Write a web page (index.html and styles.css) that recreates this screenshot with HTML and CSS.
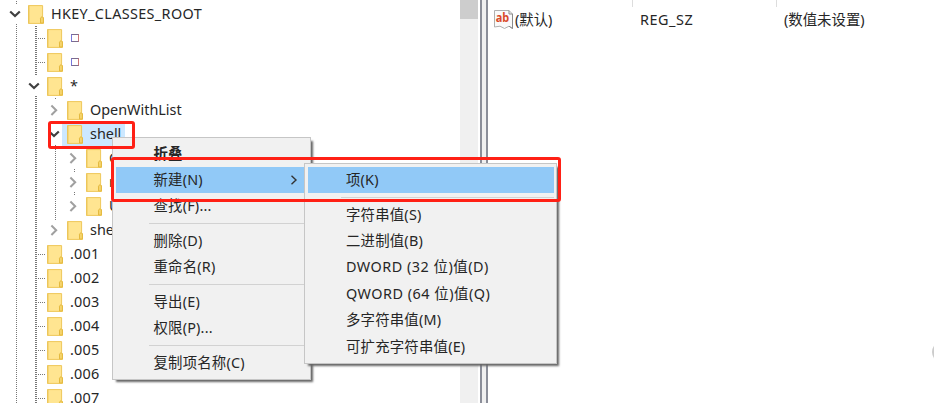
FILE: index.html
```
<!DOCTYPE html>
<html lang="zh">
<head>
<meta charset="utf-8">
<title>注册表编辑器</title>
<link rel="stylesheet" href="styles.css">
</head>
<body>
<svg width="0" height="0" class="defs">
  <symbol id="folder" viewBox="0 0 16 19">
    <path d="M.6 .6H14.6V11.5L15.5 13V18.4H.6Z" fill="#ffe591" stroke="#efc75a"/>
    <path d="M.7 .5V18.5" stroke="#ecc65a" stroke-width="1.4"/>
    <path d="M12.5 18V13.2L14 11.5L15.4 13V18Z" fill="#f5d46d" stroke="#e4b93f"/>
  </symbol>
  <symbol id="down" viewBox="0 0 12 12"><path d="M1.2 3.5L6 8.1L10.8 3.5" fill="none" stroke="#404040" stroke-width="2.2"/></symbol>
  <symbol id="right" viewBox="0 0 12 12"><path d="M3.4 1.5L8.2 6.2L3.4 11" fill="none" stroke="#a0a0a0" stroke-width="2"/></symbol>
</svg>
<main class="window">
  <section class="tree">
    <svg class="guides" width="100" height="403">
      <g fill="none" stroke="#777" stroke-dasharray="1 1">
        <path d="M16.5 1V4M16.5 24V403M55.5 98V100M55.5 121V124M55.5 145V220M74.5 169V173M74.5 192V196"/>
        <path d="M36 26V76M36 96V403" stroke-width="2"/>
        <path d="M38 38.5H45M38 62.5H45M38 254.5H45M38 278.5H45M38 302.5H45M38 326.5H45M38 350.5H45M38 374.5H45M38 398.5H45"/>
      </g>
    </svg>
    <div class="row l0"><svg class="chev"><use href="#down"/></svg><svg class="folder"><use href="#folder"/></svg><span class="root">HKEY_CLASSES_ROOT</span></div>
    <div class="row l1"><i class="chev"></i><svg class="folder"><use href="#folder"/></svg><i class="box"></i></div>
    <div class="row l1"><i class="chev"></i><svg class="folder"><use href="#folder"/></svg><i class="box"></i></div>
    <div class="row l1"><svg class="chev"><use href="#down"/></svg><svg class="folder"><use href="#folder"/></svg><span>*</span></div>
    <div class="row l2"><svg class="chev"><use href="#right"/></svg><svg class="folder"><use href="#folder"/></svg><span class="open">OpenWithList</span></div>
    <div class="row l2 selected"><svg class="chev"><use href="#down"/></svg><svg class="folder"><use href="#folder"/></svg><span class="open">shell</span></div>
    <div class="row l3"><svg class="chev"><use href="#right"/></svg><svg class="folder"><use href="#folder"/></svg><span>Co</span></div>
    <div class="row l3"><svg class="chev"><use href="#right"/></svg><svg class="folder"><use href="#folder"/></svg><span>ru</span></div>
    <div class="row l3"><svg class="chev"><use href="#right"/></svg><svg class="folder"><use href="#folder"/></svg><span>Up</span></div>
    <div class="row l2"><svg class="chev"><use href="#right"/></svg><svg class="folder"><use href="#folder"/></svg><span class="open">shellex</span></div>
    <div class="row l1"><i class="chev"></i><svg class="folder"><use href="#folder"/></svg><span>.001</span></div>
    <div class="row l1"><i class="chev"></i><svg class="folder"><use href="#folder"/></svg><span>.002</span></div>
    <div class="row l1"><i class="chev"></i><svg class="folder"><use href="#folder"/></svg><span>.003</span></div>
    <div class="row l1"><i class="chev"></i><svg class="folder"><use href="#folder"/></svg><span>.004</span></div>
    <div class="row l1"><i class="chev"></i><svg class="folder"><use href="#folder"/></svg><span>.005</span></div>
    <div class="row l1"><i class="chev"></i><svg class="folder"><use href="#folder"/></svg><span>.006</span></div>
    <div class="row l1"><i class="chev"></i><svg class="folder"><use href="#folder"/></svg><span>.007</span></div>
  </section>
  <div class="scrollbar"><div class="thumb"></div></div>
  <div class="splitter"></div>
  <section class="values">
    <div class="headline"><i></i><i></i></div>
    <div class="value">
      <div class="name">
        <svg width="20" height="21" viewBox="0 0 20 21">
          <path d="M.5 1.5H15L18.5 5V19.5L15 17.2L10.5 19.5L6 17.2L.5 18Z" fill="#fafafa" stroke="#b0b0b0"/>
          <path d="M15 1.5V5H18.5V19.5L15 17.2" fill="none" stroke="#8b8b8b"/>
          <text x="1.8" y="13" textLength="13.5" lengthAdjust="spacingAndGlyphs">ab</text>
        </svg><span>(默认)</span>
      </div>
      <span class="type">REG_SZ</span><span class="data">(数值未设置)</span>
    </div>
  </section>
</main>
<div class="edge"></div>
<div class="menu main">
  <div class="item bold">折叠</div>
  <div class="item hot">新建(N)<svg class="arrow" width="8" height="10"><path d="M1.5 .8L6 5L1.5 9.2" fill="none" stroke="#333" stroke-width="1.4"/></svg></div>
  <div class="item">查找(F)...</div>
  <hr>
  <div class="item">删除(D)</div>
  <div class="item">重命名(R)</div>
  <hr>
  <div class="item">导出(E)</div>
  <div class="item">权限(P)...</div>
  <hr>
  <div class="item">复制项名称(C)</div>
</div>
<div class="menu sub">
  <div class="item hot">项(K)</div>
  <hr>
  <div class="item">字符串值(S)</div>
  <div class="item">二进制值(B)</div>
  <div class="item word">DWORD (32 位)值(D)</div>
  <div class="item word">QWORD (64 位)值(Q)</div>
  <div class="item">多字符串值(M)</div>
  <div class="item">可扩充字符串值(E)</div>
</div>
<div class="mark mark-key"></div>
<div class="mark mark-new"></div>
</body>
</html>
```

FILE: styles.css
```
* { box-sizing: border-box; }
body {
  margin: 0;
  width: 934px;
  height: 403px;
  overflow: hidden;
  position: relative;
  background: #fff;
  color: #262626;
  font: 14.4px/24px "Noto Sans", "Noto Sans CJK SC", sans-serif;
}
.defs { position: absolute; }
.window { display: flex; height: 403px; overflow: hidden; }
.tree { position: relative; width: 460px; padding-top: 2px; flex: none; }
.guides { position: absolute; left: 0; top: 0; }
.row { position: relative; display: flex; align-items: center; height: 24px; white-space: nowrap; }
.l0 { padding-left: 9px; }
.l1 { padding-left: 28px; }
.l2 { padding-left: 48px; }
.l3 { padding-left: 67px; }
.chev { width: 12px; height: 12px; margin-right: 7px; flex: none; }
.folder { width: 16px; height: 19px; margin-right: 7px; flex: none; }
.row span { letter-spacing: .2px; }
.row .root { letter-spacing: .35px; }
.row .open { letter-spacing: 0; }
.box { width: 8px; height: 8px; margin-left: 1px; border: 1px solid #7b6b8d; border-left-color: #77d; border-right-color: #c77; }
.selected { width: 125px; background: linear-gradient(to right, transparent 62px, #cce8ff 62px); }
.scrollbar { width: 18px; background: #f0f0f0; flex: none; }
.thumb { height: 19px; background: #cdcdcd; }
.splitter { width: 8px; margin-left: 2px; border: solid #8b8e99; border-width: 0 2px; background: #f0f0f0; flex: none; }
.values { flex: 1; padding-left: 6px; }
.headline { display: flex; height: 7px; padding-left: 138px; gap: 143px; }
.headline i { width: 1px; background: #ddd; }
.value { display: grid; grid-template-columns: 146px 144px 1fr; height: 25px; align-items: center; }
.name { display: flex; align-items: center; gap: 1px; }
.type { letter-spacing: .55px; }
.name text { font: bold 12.5px "Noto Sans", sans-serif; fill: #d94a2a; }
.edge { position: absolute; left: 932px; top: 341px; width: 22px; height: 22px; border-radius: 50%; background: #ccc; }
.menu { position: absolute; background: #f1f1f1; border: 1px solid #c6c6c6; box-shadow: 3px 3px 2px -1px #666; }
.main { left: 112px; top: 137px; width: 199px; height: 243px; padding: 2.4px 6px 0 3px; }
.sub { left: 304px; top: 163px; width: 253px; height: 201px; padding: 2.8px 2px 0 3px; }
.item { display: flex; align-items: center; height: 26.4px; padding-left: 37.5px; white-space: nowrap; letter-spacing: .2px; }
.sub .item { padding-left: 38px; }
.sub .word { letter-spacing: .5px; }
.bold { font-weight: 700; }
.hot { background: #91c9f7; }
.arrow { margin-left: auto; margin-right: 6px; }
hr { height: 1px; margin: 3.8px 0 3.4px 33px; border: 0; background: #d2d2d2; }
.mark { position: absolute; border: 3px solid #ff2015; border-radius: 3px; }
.mark-key { left: 48px; top: 121px; width: 87px; height: 28px; }
.mark-new { left: 111px; top: 157px; width: 450px; height: 45px; }
```
